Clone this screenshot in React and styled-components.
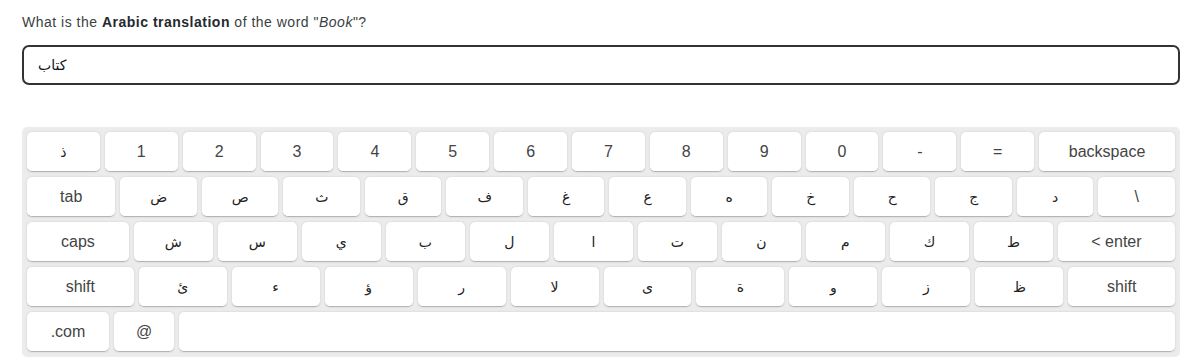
import React, { useState } from 'react';
import styled, { createGlobalStyle } from 'styled-components';

const GlobalStyle = createGlobalStyle`
    body {
        margin: 0;
        background: #fff;
        font-family: "Liberation Sans", Arial, sans-serif;
    }
`;

const ROWS = [
    [['ذ'], ['1'], ['2'], ['3'], ['4'], ['5'], ['6'], ['7'], ['8'], ['9'], ['0'], ['-'], ['='], ['backspace', 2]],
    [['tab', 1.18], ['ض'], ['ص'], ['ث'], ['ق'], ['ف'], ['غ'], ['ع'], ['ه'], ['خ'], ['ح'], ['ج'], ['د'], ['\\']],
    [['caps', 1.33], ['ش'], ['س'], ['ي'], ['ب'], ['ل'], ['ا'], ['ت'], ['ن'], ['م'], ['ك'], ['ط'], ['< enter', 1.55]],
    [['shift', 1.24], ['ئ'], ['ء'], ['ؤ'], ['ر'], ['لا'], ['ى'], ['ة'], ['و'], ['ز'], ['ظ'], ['shift', 1.24]],
];

const Page = styled.div`
    padding: 14px 22px 0 22px;
`;

const Question = styled.p`
    margin: 0;
    font-size: 14px;
    line-height: 16px;
    color: #3a3f44;
    letter-spacing: 0.5px;

    b {
        color: #24292e;
        font-weight: 700;
    }
`;

const AnswerInput = styled.input`
    display: block;
    box-sizing: border-box;
    width: 100%;
    height: 40px;
    margin-top: 15px;
    padding: 0 14px;
    border: 2px solid #333;
    border-radius: 7px;
    font-family: "DejaVu Sans", "Liberation Sans", sans-serif;
    font-size: 14px;
    color: #111;
    outline: none;
    text-align: left;
`;

const Keyboard = styled.div`
    box-sizing: border-box;
    margin-top: 42px;
    padding: 5px;
    background: #ececec;
    border-radius: 5px;
    display: flex;
    flex-direction: column;
    gap: 5px;
`;

const Row = styled.div`
    display: flex;
    gap: 5px;
`;

const Key = styled.div`
    box-sizing: border-box;
    flex: ${props => props.$width ? `0 0 ${props.$width}px` : `${props.$grow} 1 0`};
    height: 40px;
    padding: 5px;
    display: flex;
    align-items: center;
    justify-content: center;
    background: #fff;
    border-radius: 5px;
    border-bottom: 1px solid #b5b5b5;
    box-shadow: 0 0 3px -1px rgba(0, 0, 0, 0.3);
    color: ${props => props.$arabic ? '#222' : '#444'};
    font-size: ${props => props.$arabic ? '14px' : '16px'};
    font-family: ${props => props.$arabic ? '"DejaVu Sans", sans-serif' : '"Liberation Sans", Arial, sans-serif'};
    cursor: pointer;
    user-select: none;
`;

const isArabic = (s) => /[\u0600-\u06FF]/.test(s);

const App = () => {
    const [value, setValue] = useState('كتاب');

    return (
        <Page>
            <GlobalStyle />
            <Question>
                What is the <b>Arabic translation</b> of the word "<i>Book</i>"?
            </Question>
            <AnswerInput value={value} onChange={(e) => setValue(e.target.value)} />
            <Keyboard>
                {ROWS.map((row, i) => (
                    <Row key={i}>
                        {row.map(([label, grow], j) => (
                            <Key key={j} $grow={grow || 1} $arabic={isArabic(label)}>{label}</Key>
                        ))}
                    </Row>
                ))}
                <Row>
                    <Key $width={82}>.com</Key>
                    <Key $width={60}>@</Key>
                    <Key $grow={1} />
                </Row>
            </Keyboard>
        </Page>
    );
};

export default App;
